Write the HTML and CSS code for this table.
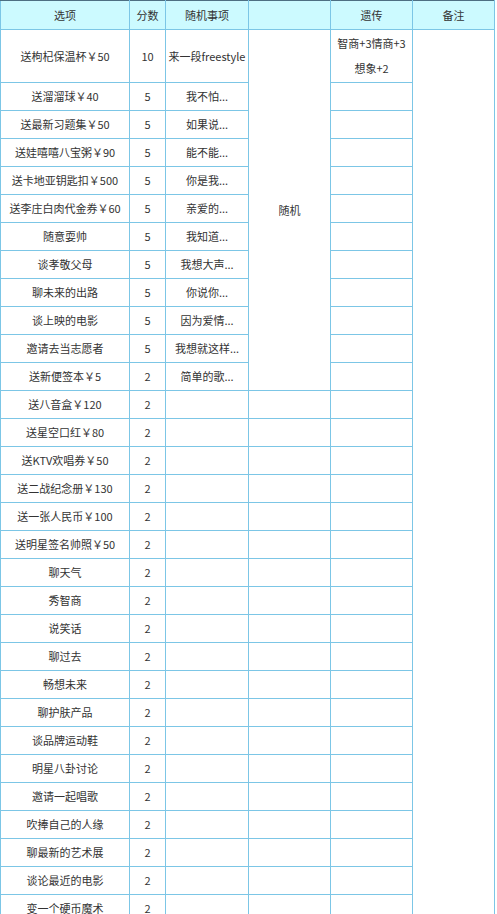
FILE: index.html
```html
<!DOCTYPE html>
<html lang="zh">
<head>
<meta charset="utf-8">
<title>选项表</title>
<link rel="stylesheet" href="styles.css">
</head>
<body>
<table class="grid">
  <colgroup>
    <col class="c-opt"><col class="c-score"><col class="c-event"><col class="c-rand"><col class="c-gene"><col class="c-note">
  </colgroup>
  <thead>
    <tr><th>选项</th><th>分数</th><th>随机事项</th><th></th><th>遗传</th><th>备注</th></tr>
  </thead>
  <tbody>
    <tr><td>送枸杞保温杯￥50</td><td>10</td><td>来一段freestyle</td><td rowspan="12">随机</td><td class="gene">智商+3情商+3<br>想象+2</td><td rowspan="31"></td></tr>
    <tr><td>送溜溜球￥40</td><td>5</td><td>我不怕...</td><td></td></tr>
    <tr><td>送最新习题集￥50</td><td>5</td><td>如果说...</td><td></td></tr>
    <tr><td>送娃嘻嘻八宝粥￥90</td><td>5</td><td>能不能...</td><td></td></tr>
    <tr><td>送卡地亚钥匙扣￥500</td><td>5</td><td>你是我...</td><td></td></tr>
    <tr><td>送李庄白肉代金券￥60</td><td>5</td><td>亲爱的...</td><td></td></tr>
    <tr><td>随意耍帅</td><td>5</td><td>我知道...</td><td></td></tr>
    <tr><td>谈孝敬父母</td><td>5</td><td>我想大声...</td><td></td></tr>
    <tr><td>聊未来的出路</td><td>5</td><td>你说你...</td><td></td></tr>
    <tr><td>谈上映的电影</td><td>5</td><td>因为爱情...</td><td></td></tr>
    <tr><td>邀请去当志愿者</td><td>5</td><td>我想就这样...</td><td></td></tr>
    <tr><td>送新便签本￥5</td><td>2</td><td>简单的歌...</td><td></td></tr>
    <tr><td>送八音盒￥120</td><td>2</td><td></td><td></td><td></td></tr>
    <tr><td>送星空口红￥80</td><td>2</td><td></td><td></td><td></td></tr>
    <tr><td>送KTV欢唱券￥50</td><td>2</td><td></td><td></td><td></td></tr>
    <tr><td>送二战纪念册￥130</td><td>2</td><td></td><td></td><td></td></tr>
    <tr><td>送一张人民币￥100</td><td>2</td><td></td><td></td><td></td></tr>
    <tr><td>送明星签名帅照￥50</td><td>2</td><td></td><td></td><td></td></tr>
    <tr><td>聊天气</td><td>2</td><td></td><td></td><td></td></tr>
    <tr><td>秀智商</td><td>2</td><td></td><td></td><td></td></tr>
    <tr><td>说笑话</td><td>2</td><td></td><td></td><td></td></tr>
    <tr><td>聊过去</td><td>2</td><td></td><td></td><td></td></tr>
    <tr><td>畅想未来</td><td>2</td><td></td><td></td><td></td></tr>
    <tr><td>聊护肤产品</td><td>2</td><td></td><td></td><td></td></tr>
    <tr><td>谈品牌运动鞋</td><td>2</td><td></td><td></td><td></td></tr>
    <tr><td>明星八卦讨论</td><td>2</td><td></td><td></td><td></td></tr>
    <tr><td>邀请一起唱歌</td><td>2</td><td></td><td></td><td></td></tr>
    <tr><td>吹捧自己的人缘</td><td>2</td><td></td><td></td><td></td></tr>
    <tr><td>聊最新的艺术展</td><td>2</td><td></td><td></td><td></td></tr>
    <tr><td>谈论最近的电影</td><td>2</td><td></td><td></td><td></td></tr>
    <tr><td>变一个硬币魔术</td><td>2</td><td></td><td></td><td></td></tr>
  </tbody>
</table>
</body>
</html>
```
FILE: styles.css
```css
html, body {
  margin: 0;
  padding: 0;
  background: #ffffff;
}

.grid {
  border-collapse: collapse;
  table-layout: fixed;
  width: 495px;
  font-family: "Noto Sans CJK SC", "Noto Sans", sans-serif;
  font-size: 11px;
  color: #333333;
  border-top: 1px solid #4d6f82;
}

.c-opt { width: 129px; }
.c-score { width: 36px; }
.c-event { width: 83px; }
.c-rand { width: 82px; }
.c-gene { width: 82px; }
.c-note { width: 82px; }

.grid th,
.grid td {
  border: 1px solid #7cc6e6;
  text-align: center;
  vertical-align: middle;
  padding: 1px 0;
  line-height: 25px;
  white-space: nowrap;
  overflow: hidden;
  font-weight: normal;
}

.grid thead th {
  background: #ccfaff;
  border-top-color: #4d6f82;
  height: 26px;
}

.grid td.gene {
  line-height: 25px;
}
```
